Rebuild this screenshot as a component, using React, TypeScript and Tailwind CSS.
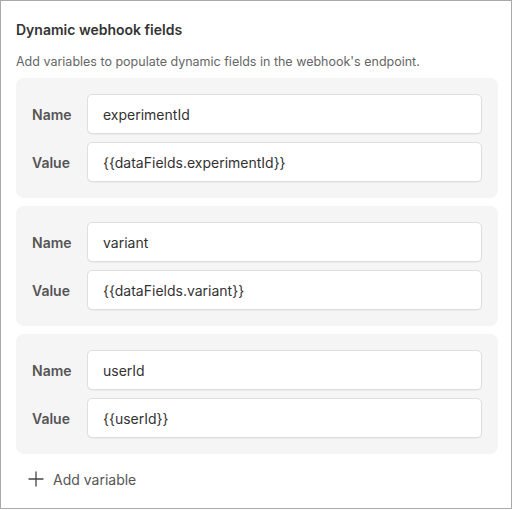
import { Plus } from "lucide-react";

const fields = [
  { name: "experimentId", value: "{{dataFields.experimentId}}" },
  { name: "variant", value: "{{dataFields.variant}}" },
  { name: "userId", value: "{{userId}}" },
];

function FieldRow({ label, value }: { label: string; value: string }) {
  return (
    <div className="flex items-center">
      <label className="w-[55px] shrink-0 text-[14px] font-semibold text-[#555555]">
        {label}
      </label>
      <div className="flex h-10 flex-1 items-center rounded-[5px] border border-[#dedede] bg-white px-[15px] text-[14px] text-[#333333] shadow-[0_1px_1px_rgba(0,0,0,0.04)]">
        {value}
      </div>
    </div>
  );
}

export default function App() {
  return (
    <div className="h-[510px] w-[513px] bg-white font-['Inter',sans-serif]">
      <div className="h-[509px] w-[512px] border border-[#a9a9a9] pl-[15px] pr-[13px]">
        <h2 className="mt-[19px] text-[14px] font-semibold leading-5 text-[#333333]">
          Dynamic webhook fields
        </h2>
        <p className="mt-[12px] text-[12.5px] leading-5 text-[#666666]">
          Add variables to populate dynamic fields in the webhook&apos;s endpoint.
        </p>
        <div className="mt-[6px] flex flex-col gap-2">
          {fields.map((f) => (
            <div
              key={f.name}
              className="flex flex-col gap-2 rounded-lg bg-[#f5f5f5] p-4"
            >
              <FieldRow label="Name" value={f.name} />
              <FieldRow label="Value" value={f.value} />
            </div>
          ))}
        </div>
        <button
          type="button"
          className="mt-[13px] ml-[8px] flex items-center gap-[5px] text-[14px] text-[#555555]"
        >
          <Plus className="h-6 w-6 text-[#444444]" strokeWidth={1.3} />
          Add variable
        </button>
      </div>
    </div>
  );
}
